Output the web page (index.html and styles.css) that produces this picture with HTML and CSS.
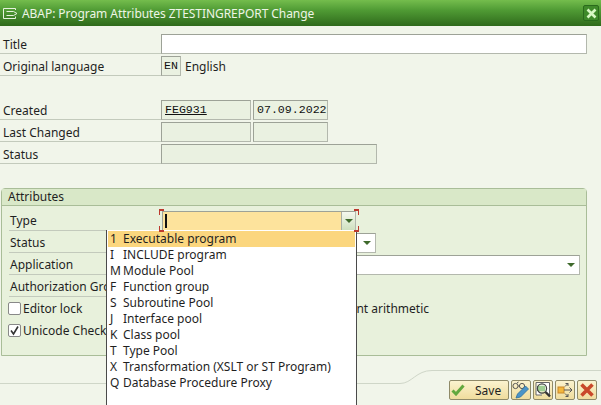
FILE: index.html
```html
<!DOCTYPE html>
<html>
<head>
    <title>ABAP: Program Attributes</title>
    <meta name="viewport" content="width=device-width, initial-scale=1.0">
    <link rel="stylesheet" href="styles.css">
</head>
<body>
    <div class="window">
        <header class="titlebar">
            <svg class="title-icon" width="15" height="11" viewBox="0 0 15 11">
                <path d="M12.5 2V.5H.5V10.5H12.5V8.5M3.5 3.5H10.5L14 5.5L10.5 7.5H3.5" fill="none" stroke="#e6f2dc" stroke-width="1"/>
            </svg>
            <span class="title-text">ABAP: Program Attributes ZTESTINGREPORT Change</span>
            <button class="close-btn">
                <svg width="11" height="11" viewBox="0 0 11 11">
                    <path d="M1.5 1.5L9.5 9.5M9.5 1.5L1.5 9.5" stroke="#d8f7c4" stroke-width="2.6"/>
                </svg>
            </button>
        </header>

        <section class="top-form">
            <div class="row">
                <label class="row-label">Title</label>
                <div class="field field-white field-title"></div>
            </div>
            <div class="row">
                <label class="row-label">Original language</label>
                <div class="field field-mono field-lang">EN</div>
                <span class="lang-name">English</span>
            </div>
            <div class="row"></div>
            <div class="row">
                <label class="row-label">Created</label>
                <div class="field field-mono field-user"><u>FEG931</u></div>
                <div class="field field-mono field-date">07.09.2022</div>
            </div>
            <div class="row">
                <label class="row-label">Last Changed</label>
                <div class="field field-user"></div>
                <div class="field field-date"></div>
            </div>
            <div class="row">
                <label class="row-label">Status</label>
                <div class="field field-status"></div>
            </div>
        </section>

        <section class="group">
            <div class="group-title">Attributes</div>
            <div class="group-body">
                <div class="row">
                    <label class="row-label">Type</label>
                    <div class="type-wrap">
                        <div class="field field-active">
                            <span class="caret"></span>
                            <span class="f4-btn"><span class="arrow"></span></span>
                        </div>
                        <i class="mark mark-tl"></i><i class="mark mark-tr"></i>
                        <i class="mark mark-bl"></i><i class="mark mark-br"></i>
                    </div>
                </div>
                <div class="row">
                    <label class="row-label">Status</label>
                    <div class="field field-white field-combo field-gstatus"><span class="arrow"></span></div>
                </div>
                <div class="row">
                    <label class="row-label">Application</label>
                    <div class="field field-white field-combo field-app"><span class="arrow"></span></div>
                </div>
                <div class="row">
                    <label class="row-label">Authorization Group</label>
                </div>
                <div class="check-row">
                    <span class="check"></span>
                    <span class="check-text">Editor lock</span>
                    <span class="check-right">Fixed point arithmetic</span>
                </div>
                <div class="check-row">
                    <span class="check">
                        <svg width="11" height="11" viewBox="0 0 11 11">
                            <path d="M2 5.5L4.5 9L9 1.5" fill="none" stroke="#333" stroke-width="1.6"/>
                        </svg>
                    </span>
                    <span class="check-text">Unicode Checks Active</span>
                </div>
            </div>
        </section>

        <svg class="footer-curve" width="601" height="20" viewBox="0 0 601 20">
            <path d="M0 18.5H400C412 18.5 416 5.5 432 5.5H601" fill="none" stroke="#cfd6c8"/>
        </svg>

        <footer class="toolbar">
            <button class="btn btn-save">
                <svg width="14" height="12" viewBox="0 0 14 12">
                    <path d="M1.5 6.5L5 10L12.5 1.5" fill="none" stroke="#62a83e" stroke-width="3"/>
                </svg>
                <span>Save</span>
            </button>
            <button class="btn btn-icon">
                <svg width="18" height="18" viewBox="0 0 18 18">
                    <circle cx="3.5" cy="5" r="2.6" fill="none" stroke="#555" stroke-width="1"/>
                    <circle cx="10" cy="5" r="2.6" fill="none" stroke="#555" stroke-width="1"/>
                    <path d="M6.1 5H7.4M5 2L6.5 1" stroke="#555"/>
                    <path d="M4 17L5.5 13L13.5 5L16.5 8L8.5 16Z" fill="#4a94c8" stroke="#2c6d9c" stroke-width=".8"/>
                </svg>
            </button>
            <button class="btn btn-icon">
                <svg width="18" height="18" viewBox="0 0 18 18">
                    <path d="M2 1.5H15.5V14M2 1.5V14H8" fill="#fff" stroke="#666"/>
                    <rect x="3" y="5" width="8" height="5" fill="#58a84a"/>
                    <circle cx="8" cy="7.5" r="4.6" fill="#cfe8c4" fill-opacity=".6" stroke="#444" stroke-width="1.2"/>
                    <path d="M11.5 11L16 15.5" stroke="#333" stroke-width="2.4"/>
                </svg>
            </button>
            <button class="btn btn-icon">
                <svg width="18" height="18" viewBox="0 0 18 18">
                    <rect x="2" y="6" width="6" height="6" fill="#f2b63c" stroke="#c8862a"/>
                    <path d="M8 9H16M13.5 6.5L16 9L13.5 11.5M9 5.5L12 2.5M12 2.5H9.5M12 2.5V5M9 12.5L12 15.5M12 15.5H9.5M12 15.5V13" fill="none" stroke="#555"/>
                </svg>
            </button>
            <button class="btn btn-icon">
                <svg width="18" height="18" viewBox="0 0 18 18">
                    <path d="M3.5 3.5L14.5 14.5M14.5 3.5L3.5 14.5" stroke="#c9482a" stroke-width="3.6"/>
                </svg>
            </button>
        </footer>

        <ul class="dropdown">
            <li class="selected"><b>1</b>Executable program</li>
            <li><b>I</b>INCLUDE program</li>
            <li><b>M</b>Module Pool</li>
            <li><b>F</b>Function group</li>
            <li><b>S</b>Subroutine Pool</li>
            <li><b>J</b>Interface pool</li>
            <li><b>K</b>Class pool</li>
            <li><b>T</b>Type Pool</li>
            <li><b>X</b>Transformation (XSLT or ST Program)</li>
            <li><b>Q</b>Database Procedure Proxy</li>
        </ul>
    </div>
</body>
</html>
```

FILE: styles.css
```css
html, body {
    margin: 0;
    padding: 0;
}

body {
    background-color: #f1f5ea;
    font-family: "Noto Sans", sans-serif;
    font-size: 12px;
    color: #1f1f1f;
    overflow: hidden;
}

.window {
    position: relative;
    width: 601px;
    height: 405px;
    overflow: hidden;
}

/* title bar */
.titlebar {
    display: flex;
    align-items: center;
    height: 26px;
    box-sizing: border-box;
    padding-left: 3px;
    background: linear-gradient(#74bd4d, #4f9a34 40%, #2f6a1b);
    color: #eef5e6;
    font-size: 12px;
    letter-spacing: -0.06px;
}

.title-icon {
    margin-right: 4px;
}

.title-text {
    flex: 1;
}

.close-btn {
    width: 16px;
    height: 16px;
    margin-right: 2px;
    padding: 0;
    display: flex;
    align-items: center;
    justify-content: center;
    background: #3f8a2a;
    border: 1px solid #2a6a1c;
    border-radius: 2px;
}

/* rows */
.top-form {
    padding-top: 6px;
    height: 162px;
    box-sizing: border-box;
}

.row {
    display: flex;
    align-items: flex-end;
    height: 22px;
}

.row-label {
    width: 161px;
    height: 22px;
    padding: 4px 0 0 3px;
    box-sizing: border-box;
    flex-shrink: 0;
    line-height: 18px;
    white-space: nowrap;
    border-bottom: 1px solid #c3cabc;
}

.lang-name {
    align-self: center;
    margin-top: 3px;
}

/* input fields */
.field {
    height: 20px;
    box-sizing: border-box;
    border: 1px solid #b3b8ad;
    border-top-color: #9da297;
    border-left-color: #9da297;
    background: #eaf1e1;
    margin-right: 2px;
    flex-shrink: 0;
}

.field-white {
    background: #fff;
}

.field-mono {
    font-family: "Liberation Mono", monospace;
    font-size: 11.6px;
    line-height: 18px;
    padding-left: 3px;
    color: #111;
}

.field-title {
    width: 426px;
}

.field-lang {
    width: 20px;
    margin-right: 4px;
    padding-left: 2px;
}

.field-user {
    width: 90px;
}

.field-date {
    width: 75px;
}

.field-status {
    width: 216px;
}

/* attributes group */
.group {
    margin: 0 14px 0 1px;
    height: 168px;
    box-sizing: border-box;
    background: #e8f1dc;
    border: 1px solid #a9bd98;
    border-top-left-radius: 4px;
    border-top-right-radius: 4px;
}

.group-title {
    height: 16px;
    padding-left: 6px;
    line-height: 15px;
    background: #d9e8c8;
    border-bottom: 1px solid #a9bd98;
}

.group-body {
    padding: 3px 6px 0 7px;
}

.group-body .row-label {
    width: 153px;
    padding: 3px 0 0 1px;
}

.type-wrap {
    position: relative;
    width: 194px;
    height: 20px;
}

.field-active {
    position: relative;
    width: 194px;
    background: #fde39c;
    margin: 0;
}

.caret {
    position: absolute;
    left: 2px;
    top: 2px;
    width: 2px;
    height: 14px;
    background: #111;
}

.f4-btn {
    position: absolute;
    right: 0;
    top: 0;
    width: 13px;
    height: 18px;
    display: flex;
    align-items: center;
    justify-content: center;
    background: linear-gradient(#f4f8ee, #cfe0bf);
    border-left: 1px solid #a9aea4;
}

.arrow {
    width: 0;
    height: 0;
    border-left: 4px solid transparent;
    border-right: 4px solid transparent;
    border-top: 4px solid #3f6a2c;
}

.field-combo {
    display: flex;
    align-items: center;
    justify-content: flex-end;
    padding-right: 4px;
}

.field-gstatus {
    width: 214px;
}

.field-app {
    width: 418px;
}

/* required markers around the type field */
.mark {
    position: absolute;
    z-index: 2;
    width: 4px;
    height: 4px;
    border: 0 solid #bc3a2e;
}

.mark-tl { left: -3px; top: -2px; border-width: 2px 0 0 1px; }
.mark-tr { right: -3px; top: -2px; border-width: 2px 1px 0 0; }
.mark-bl { left: -3px; bottom: -1px; border-width: 0 0 2px 1px; }
.mark-br { right: -3px; bottom: -1px; border-width: 0 1px 2px 0; }

/* checkboxes */
.check-row {
    display: flex;
    align-items: center;
    height: 22px;
    margin-left: -1px;
}

.check {
    width: 11px;
    height: 11px;
    display: block;
    border: 1px solid #888;
    border-radius: 2px;
    background: #fff;
    margin-right: 2px;
}

.check svg {
    display: block;
}

.check-right {
    margin-left: auto;
    margin-right: 151px;
}

/* bottom toolbar */
.footer-curve {
    position: absolute;
    left: 0;
    top: 365px;
}

.toolbar {
    display: flex;
    justify-content: flex-end;
    gap: 2px;
    padding: 24px 4px 0 0;
}

.btn {
    position: relative;
    height: 20px;
    padding: 0;
    display: flex;
    align-items: center;
    justify-content: center;
    background: linear-gradient(#fbf3cf, #efdc9d);
    border: 1px solid #8f8a68;
    border-radius: 2px;
    font-family: inherit;
    font-size: 12px;
    color: #1f1f1f;
}

.btn-save {
    width: 60px;
    justify-content: flex-start;
    padding-left: 1px;
    gap: 10px;
}

.btn-icon {
    width: 20px;
}

/* value list popup */
.dropdown {
    position: absolute;
    left: 106px;
    top: 230px;
    width: 251px;
    height: 180px;
    margin: 0;
    padding: 1px 1px 0;
    box-sizing: border-box;
    list-style: none;
    background: #fff;
    border: 1px solid #4a4a4a;
    border-top: none;
}

.dropdown li {
    height: 16px;
    line-height: 15px;
    padding-left: 2px;
    white-space: nowrap;
}

.dropdown b {
    display: inline-block;
    width: 13px;
    font-weight: normal;
}

.dropdown .selected {
    background: #fbd67e;
}
```
